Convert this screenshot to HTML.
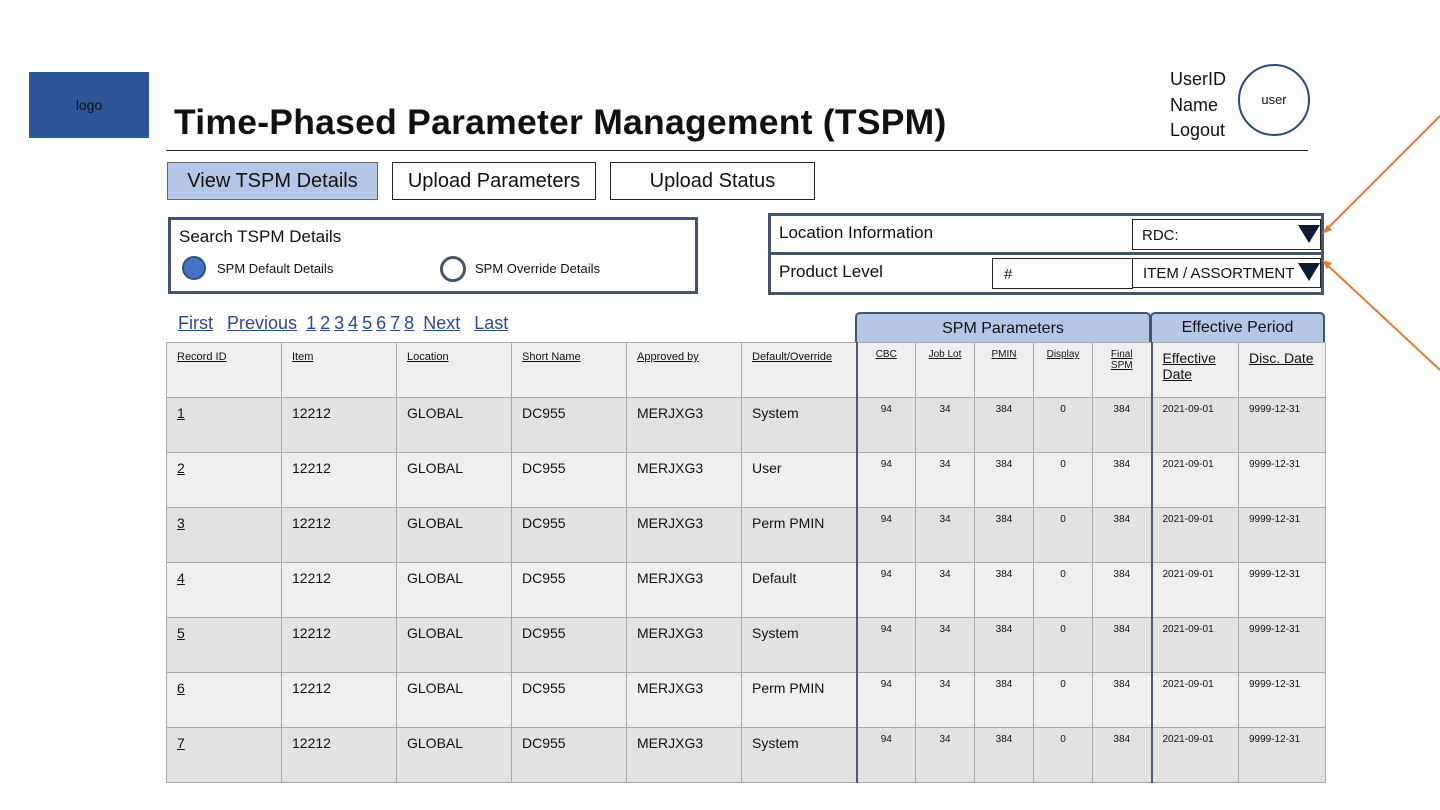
<!DOCTYPE html>
<html><head><meta charset="utf-8"><style>
body{margin:0;width:1440px;height:810px;background:#fff;font-family:"Liberation Sans",Arial,sans-serif;position:relative;overflow:hidden;color:#111}
.a{position:absolute}
.btn{position:absolute;border:1px solid #222;font-size:20px;text-align:center;line-height:36px;box-sizing:border-box;height:38px}
table{position:absolute;left:166px;top:342px;border-collapse:collapse;table-layout:fixed}
td{border:1px solid #aaa;vertical-align:top;height:55px;padding:0;font-size:14px;box-sizing:border-box}
td.t{padding:7px 0 0 10px}
td.p{font-size:10px;text-align:center;padding-top:6px}
td.e{font-size:10px;padding:6px 0 0 10px}
tr.h td{background:#efefef}
tr.h td.t{font-size:11px;text-decoration:underline;padding-top:8px}
tr.h td.p{font-size:10px;text-decoration:underline;padding-top:6px}
tr.h td.e{font-size:14px;text-decoration:underline;padding-top:7px;line-height:16px}
tr.d td{background:#e2e2e2}
tr.l td{background:#efefef}
td.bl{border-left:2px solid #4a5a78}
.pg a{color:#2c4a8a;text-decoration:underline;margin-right:4px}
</style></head><body>
<div class="a" style="left:29px;top:72px;width:120px;height:66px;background:#2d5598;color:#111;font-size:14px;text-align:center;line-height:66px">logo</div>
<div class="a" style="left:174px;top:102px;font-size:35.5px;font-weight:bold;letter-spacing:0.25px">Time-Phased Parameter Management (TSPM)</div>
<div class="a" style="left:1170px;top:67px;font-size:18px;line-height:25.5px">UserID<br>Name<br>Logout</div>
<div class="a" style="left:1238px;top:64px;width:72px;height:72px;border:2px solid #2d4a7a;border-radius:50%;box-sizing:border-box;font-size:13px;text-align:center;line-height:68px">user</div>
<div class="a" style="left:166px;top:150px;width:1142px;height:1px;background:#222"></div>
<div class="btn" style="left:167px;top:162px;width:211px;background:#b4c7e7;border-color:#666">View TSPM Details</div>
<div class="btn" style="left:392px;top:162px;width:204px">Upload Parameters</div>
<div class="btn" style="left:610px;top:162px;width:205px">Upload Status</div>
<div class="a" style="left:168px;top:217px;width:530px;height:77px;border:3px solid #44546a;box-sizing:border-box"></div>
<div class="a" style="left:179px;top:227px;font-size:17px">Search TSPM Details</div>
<div class="a" style="left:182px;top:256px;width:24px;height:24px;border-radius:50%;background:#4472c4;border:2px solid #2f4f7f;box-sizing:border-box"></div>
<div class="a" style="left:217px;top:261px;font-size:13px">SPM Default Details</div>
<div class="a" style="left:440px;top:256px;width:26px;height:26px;border-radius:50%;border:3px solid #44546a;box-sizing:border-box"></div>
<div class="a" style="left:475px;top:261px;font-size:13px">SPM Override Details</div>
<div class="a" style="left:768px;top:213px;width:556px;height:82px;border:3px solid #44546a;box-sizing:border-box"></div>
<div class="a" style="left:768px;top:252px;width:556px;height:3px;background:#44546a"></div>
<div class="a" style="left:779px;top:223px;font-size:17px">Location Information</div>
<div class="a" style="left:779px;top:262px;font-size:17px">Product Level</div>
<div class="a" style="left:1132px;top:219px;width:189px;height:31px;border:1px solid #222;box-sizing:border-box;font-size:15px;padding:7px 0 0 9px">RDC:</div>
<div class="a" style="left:992px;top:258px;width:141px;height:31px;border:1px solid #222;box-sizing:border-box;font-size:15px;padding:7px 0 0 11px">#</div>
<div class="a" style="left:1132px;top:258px;width:189px;height:30px;border:1px solid #222;box-sizing:border-box;font-size:15px;padding:6px 0 0 10px">ITEM / ASSORTMENT</div>
<svg class="a" style="left:0;top:0" width="1440" height="810">
<polygon points="1298,225 1320,225 1309,243" fill="#0d1a33"/>
<polygon points="1298,263 1320,263 1309,281" fill="#0d1a33"/>
<line x1="1324" y1="232" x2="1440" y2="116" stroke="#e07b39" stroke-width="2"/>
<polygon points="1322,234 1332,230 1327,225" fill="#e07b39"/>
<line x1="1324" y1="262" x2="1440" y2="370" stroke="#e07b39" stroke-width="2"/>
<polygon points="1322,260 1332,263 1327,269" fill="#e07b39"/>
</svg>
<div class="a pg" style="left:178px;top:313px;font-size:18px"><a>First</a>&nbsp; <a>Previous</a> <a>1</a><a>2</a><a>3</a><a>4</a><a>5</a><a>6</a><a>7</a><a>8</a> <a>Next</a>&nbsp; <a>Last</a></div>
<div class="a" style="left:855px;top:312px;width:296px;height:32px;background:#b4c7e7;border:2px solid #44546a;border-bottom:none;border-radius:5px 5px 0 0;box-sizing:border-box;text-align:center;font-size:16px;line-height:30px">SPM Parameters</div>
<div class="a" style="left:1150px;top:312px;width:175px;height:32px;background:#b4c7e7;border:2px solid #44546a;border-bottom:none;border-radius:5px 5px 0 0;box-sizing:border-box;text-align:center;font-size:16px;line-height:28px">Effective Period</div>
<table>
<colgroup><col style="width:115px"><col style="width:115px"><col style="width:115px"><col style="width:115px"><col style="width:115px"><col style="width:115px"><col style="width:59px"><col style="width:59px"><col style="width:59px"><col style="width:59px"><col style="width:59px"><col style="width:87px"><col style="width:87px"></colgroup>
<tr class="h"><td class="t">Record ID</td><td class="t">Item</td><td class="t">Location</td><td class="t">Short Name</td><td class="t">Approved by</td><td class="t">Default/Override</td><td class="p bl">CBC</td><td class="p">Job Lot</td><td class="p">PMIN</td><td class="p">Display</td><td class="p">Final<br>SPM</td><td class="e bl">Effective<br>Date</td><td class="e">Disc. Date</td></tr>
<tr class="d"><td class="t"><u>1</u></td><td class="t">12212</td><td class="t">GLOBAL</td><td class="t">DC955</td><td class="t">MERJXG3</td><td class="t">System</td><td class="p bl">94</td><td class="p">34</td><td class="p">384</td><td class="p">0</td><td class="p">384</td><td class="e bl">2021-09-01</td><td class="e">9999-12-31</td></tr>
<tr class="l"><td class="t"><u>2</u></td><td class="t">12212</td><td class="t">GLOBAL</td><td class="t">DC955</td><td class="t">MERJXG3</td><td class="t">User</td><td class="p bl">94</td><td class="p">34</td><td class="p">384</td><td class="p">0</td><td class="p">384</td><td class="e bl">2021-09-01</td><td class="e">9999-12-31</td></tr>
<tr class="d"><td class="t"><u>3</u></td><td class="t">12212</td><td class="t">GLOBAL</td><td class="t">DC955</td><td class="t">MERJXG3</td><td class="t">Perm PMIN</td><td class="p bl">94</td><td class="p">34</td><td class="p">384</td><td class="p">0</td><td class="p">384</td><td class="e bl">2021-09-01</td><td class="e">9999-12-31</td></tr>
<tr class="l"><td class="t"><u>4</u></td><td class="t">12212</td><td class="t">GLOBAL</td><td class="t">DC955</td><td class="t">MERJXG3</td><td class="t">Default</td><td class="p bl">94</td><td class="p">34</td><td class="p">384</td><td class="p">0</td><td class="p">384</td><td class="e bl">2021-09-01</td><td class="e">9999-12-31</td></tr>
<tr class="d"><td class="t"><u>5</u></td><td class="t">12212</td><td class="t">GLOBAL</td><td class="t">DC955</td><td class="t">MERJXG3</td><td class="t">System</td><td class="p bl">94</td><td class="p">34</td><td class="p">384</td><td class="p">0</td><td class="p">384</td><td class="e bl">2021-09-01</td><td class="e">9999-12-31</td></tr>
<tr class="l"><td class="t"><u>6</u></td><td class="t">12212</td><td class="t">GLOBAL</td><td class="t">DC955</td><td class="t">MERJXG3</td><td class="t">Perm PMIN</td><td class="p bl">94</td><td class="p">34</td><td class="p">384</td><td class="p">0</td><td class="p">384</td><td class="e bl">2021-09-01</td><td class="e">9999-12-31</td></tr>
<tr class="d"><td class="t"><u>7</u></td><td class="t">12212</td><td class="t">GLOBAL</td><td class="t">DC955</td><td class="t">MERJXG3</td><td class="t">System</td><td class="p bl">94</td><td class="p">34</td><td class="p">384</td><td class="p">0</td><td class="p">384</td><td class="e bl">2021-09-01</td><td class="e">9999-12-31</td></tr>
</table>
</body></html>
